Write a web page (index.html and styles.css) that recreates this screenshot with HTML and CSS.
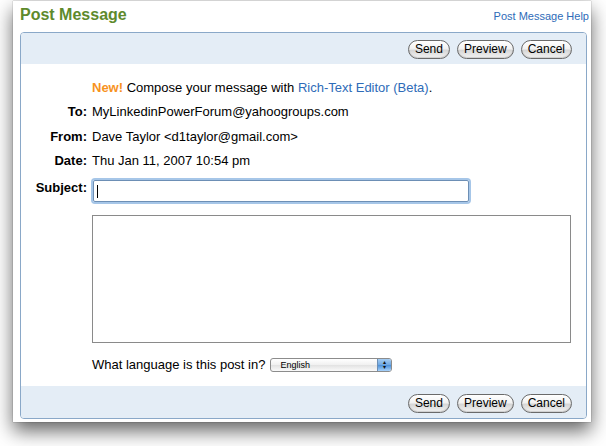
FILE: index.html
```html
<!DOCTYPE html>
<html lang="en">
<head>
    <meta charset="UTF-8">
    <title>Post Message</title>
    <link rel="stylesheet" href="styles.css">
</head>
<body>
    <div class="window">
        <div class="title-row">
            <h1>Post Message</h1>
            <a class="help" href="#">Post Message Help</a>
        </div>

        <div class="panel">
            <div class="bar">
                <button class="aqua">Send</button>
                <button class="aqua">Preview</button>
                <button class="aqua">Cancel</button>
            </div>

            <div class="form">
                <div class="row">
                    <span class="label"></span>
                    <span class="value"><span class="new">New!</span> Compose your message with <a href="#">Rich-Text Editor (Beta)</a>.</span>
                </div>
                <div class="row">
                    <span class="label">To:</span>
                    <span class="value">MyLinkedinPowerForum@yahoogroups.com</span>
                </div>
                <div class="row">
                    <span class="label">From:</span>
                    <span class="value">Dave Taylor &lt;d1taylor@gmail.com&gt;</span>
                </div>
                <div class="row">
                    <span class="label">Date:</span>
                    <span class="value">Thu Jan 11, 2007 10:54 pm</span>
                </div>
                <div class="row subject-row">
                    <span class="label">Subject:</span>
                    <div class="subject"><span class="caret"></span></div>
                </div>
                <div class="row body-row">
                    <span class="label"></span>
                    <div class="message"></div>
                </div>
                <div class="row lang-row">
                    <span class="label"></span>
                    <span class="value">What language is this post in?</span>
                    <div class="select">
                        <span class="select-text">English</span>
                        <span class="select-arrows">&#9652;<br>&#9662;</span>
                    </div>
                </div>
            </div>

            <div class="bar bottom">
                <button class="aqua">Send</button>
                <button class="aqua">Preview</button>
                <button class="aqua">Cancel</button>
            </div>
        </div>
    </div>
</body>
</html>
```

FILE: styles.css
```css
body {
    margin: 0;
    padding: 1px 0 0 13px;
    min-height: 446px;
    box-sizing: border-box;
    background-color: #ffffff;
    font-family: "Liberation Sans", Arial, sans-serif;
    font-size: 13px;
    color: #000;
}
.window {
    width: 578px;
    height: 421px;
    background-color: #fff;
    box-shadow: 0 9px 18px rgba(0, 0, 0, 0.6), 0 0 1px rgba(0, 0, 0, 0.5);
    padding: 0 4px 0 7px;
    box-sizing: border-box;
}
.title-row {
    display: flex;
    justify-content: space-between;
    align-items: baseline;
    height: 31px;
}
h1 {
    margin: 0;
    padding-top: 5px;
    font-size: 16px;
    color: #5e8a2c;
}
.help {
    font-size: 11px;
    color: #2e6bb8;
    text-decoration: none;
    margin-right: -2px;
}
.panel {
    border: 1px solid #8aa8c8;
    border-radius: 4px;
    height: 387px;
    box-sizing: border-box;
    display: flex;
    flex-direction: column;
    overflow: hidden;
}
.bar {
    background-color: #e4edf6;
    height: 30px;
    display: flex;
    justify-content: flex-end;
    align-items: center;
    gap: 7px;
    padding: 1px 14px 0 0;
}
.bar.bottom {
    margin-top: auto;
    height: 30px;
    padding-top: 2px;
}
.aqua {
    font-family: "Liberation Sans", Arial, sans-serif;
    font-size: 12px;
    height: 19px;
    padding: 0 6px;
    border: 1px solid #6a6a6a;
    border-radius: 10px;
    background: linear-gradient(#ffffff, #f2f2f2 45%, #d6d6d6 55%, #f4f4f4);
    box-shadow: inset 0 -1px 1px rgba(0, 0, 0, 0.15);
    color: #000;
    line-height: 16px;
}
.form {
    padding-top: 13px;
}
.row {
    display: flex;
    align-items: center;
    height: 20px;
    margin-bottom: 4.5px;
}
.label {
    width: 66px;
    text-align: right;
    font-weight: bold;
    padding-right: 5px;
    flex-shrink: 0;
}
.new {
    color: #f7931e;
    font-weight: bold;
}
.value a {
    color: #2e6bb8;
    text-decoration: none;
}
.subject-row {
    height: 24px;
    align-items: flex-start;
    margin-top: 8px;
    margin-bottom: 12px;
}
.subject-row .label {
    padding-top: 1px;
}
.subject {
    width: 374px;
    height: 20px;
    margin-left: 1px;
    border: 1px solid #6d8fb5;
    border-radius: 2px;
    box-shadow: 0 0 0 2px #a6c6e8;
    margin-top: 1px;
    position: relative;
}
.caret {
    position: absolute;
    left: 3px;
    top: 4px;
    width: 1px;
    height: 13px;
    background-color: #000;
}
.body-row {
    height: 128px;
    align-items: stretch;
    margin-bottom: 12px;
}
.message {
    width: 479px;
    border: 1px solid #8a8a8a;
    box-sizing: border-box;
}
.lang-row .value {
    margin-right: 5px;
}
.select {
    width: 122px;
    height: 14px;
    box-sizing: border-box;
    border: 1px solid #8c8c8c;
    border-radius: 3px;
    background: linear-gradient(#ffffff, #f0f0f0 50%, #e2e2e2 51%, #fafafa);
    display: flex;
    justify-content: space-between;
    overflow: hidden;
    margin-top: 1px;
}
.select-text {
    font-size: 9px;
    line-height: 12px;
    padding-left: 9px;
}
.select-arrows {
    width: 13px;
    background: linear-gradient(#a6cdf3, #6ea6e0 50%, #4a8fd8 51%, #a8d2fb);
    border-left: 1px solid #6d8fb5;
    font-size: 6px;
    line-height: 5px;
    text-align: center;
    padding-top: 1px;
    color: #111;
}
```
